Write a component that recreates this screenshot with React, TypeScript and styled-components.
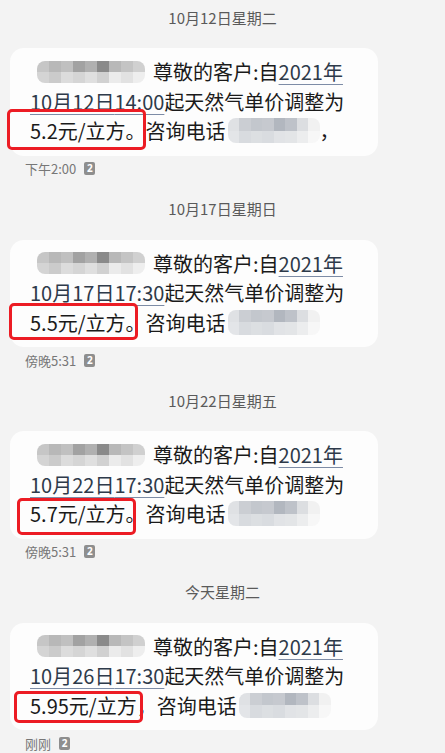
import styled, { createGlobalStyle } from "styled-components";

const GlobalStyle = createGlobalStyle`
  body {
    margin: 0;
    background: #f3f3f3;
    font-family: "Noto Sans CJK SC", "Noto Sans", sans-serif;
  }
`;

const Page = styled.div`
  width: 445px;
  height: 753px;
  overflow: hidden;
  background: #f3f3f3;
`;

const Group = styled.section`
  display: flex;
  flex-direction: column;
  padding-bottom: 14px;
`;

const DayLabel = styled.div`
  height: 34px;
  display: flex;
  align-items: center;
  justify-content: center;
  font-size: 15px;
  color: #5a5a5a;
`;

const Bubble = styled.div`
  margin: 14px 0 0 10px;
  width: 368px;
  box-sizing: border-box;
  padding: 9px 10px 10px 20px;
  background: #fdfdfd;
  border-radius: 14px;
  font-size: 20px;
  color: #1a1a1a;
`;

const Line = styled.div`
  display: flex;
  align-items: center;
  height: 29.5px;
  white-space: nowrap;
`;

const Link = styled.span`
  color: #2e3a4a;
  text-decoration: underline;
  text-decoration-color: #7d8ca6;
  text-decoration-thickness: 1px;
  text-underline-offset: 4px;
`;

const Highlight = styled.span<{ $box: [number, number, number, number] }>`
  position: relative;
  &::after {
    content: "";
    position: absolute;
    top: ${(p) => p.$box[0]}px;
    right: ${(p) => p.$box[1]}px;
    bottom: ${(p) => p.$box[2]}px;
    left: ${(p) => p.$box[3]}px;
    border: 3.5px solid #ec1c24;
    border-radius: 5px;
  }
`;

const Mosaic = styled.span<{ $left: number; $right: number }>`
  display: grid;
  grid-auto-flow: row;
  margin: 0 ${(p) => p.$right}px 0 ${(p) => p.$left}px;
  border-radius: 8px;
  overflow: hidden;
  filter: blur(0.7px);
`;

const MosaicRow = styled.span`
  display: flex;
`;

const Cell = styled.span<{ $shade: string; $w: number; $h: number }>`
  width: ${(p) => p.$w}px;
  height: ${(p) => p.$h}px;
  background: ${(p) => p.$shade};
`;

const Meta = styled.div`
  margin: 4px 0 0 25px;
  height: 18px;
  display: flex;
  align-items: center;
  gap: 8px;
  font-size: 13px;
  color: #777;
`;

const SimBadge = styled.span`
  width: 11px;
  height: 13px;
  border-radius: 2px;
  background: #8e8e8e;
  color: #fff;
  font-size: 10px;
  font-weight: 700;
  line-height: 13px;
  text-align: center;
  font-family: "Noto Sans", sans-serif;
`;

const nameRows = [
  ["#c6c6c6", "#b8b8b8", "#c0c0c0", "#a2a2a2", "#b0b0b0", "#8a8a8a", "#b8b8b8", "#c4c4c4", "#d0d0d0"],
  ["#d4d4d4", "#cbcbcb", "#dcdcdc", "#d5d5d5", "#dfdfdf", "#d1d1d1", "#ebebeb", "#e2e2e2", "#eeeeee"],
];

const phoneRows = [
  ["#dfe1e4", "#cbced3", "#c3c7cd", "#c6c9cf", "#b2b7bf", "#bec2c9", "#dcdee1", "#f1f1f1"],
  ["#e3e5e8", "#d8dbdf", "#dcdfe2", "#d9dce0", "#e1e3e6", "#e3e5e7", "#ecedee", "#f7f7f7"],
];

function Blur({ rows, w, h, left, right }: { rows: string[][]; w: number; h: number; left: number; right: number }) {
  return (
    <Mosaic $left={left} $right={right}>
      {rows.map((row, i) => (
        <MosaicRow key={i}>
          {row.map((c, j) => (
            <Cell key={j} $shade={c} $w={w} $h={h} />
          ))}
        </MosaicRow>
      ))}
    </Mosaic>
  );
}

interface IMessage {
  day: string;
  date: string;
  time: string;
  price: string;
  mark: string;
  box: [number, number, number, number];
  tail: string;
  when: string;
}

const messages: IMessage[] = [
  { day: "10月12日星期二", date: "10月12日", time: "14:00", price: "5.2元/立方", mark: "。", box: [-7, -20, -4.5, -23], tail: "，", when: "下午2:00" },
  { day: "10月17日星期日", date: "10月17日", time: "17:30", price: "5.5元/立方", mark: "。", box: [-4.5, -12, -3, -21], tail: "", when: "傍晚5:31" },
  { day: "10月22日星期五", date: "10月22日", time: "17:30", price: "5.7元/立方", mark: "。", box: [-1, -10, -6.5, -13], tail: "", when: "傍晚5:31" },
  { day: "今天星期二", date: "10月26日", time: "17:30", price: "5.95元/立方", mark: "，", box: [0, -6, -3, -16], tail: "", when: "刚刚" },
];

function App() {
  return (
    <Page>
      <GlobalStyle />
      {messages.map((m) => (
        <Group key={m.day}>
          <DayLabel>{m.day}</DayLabel>
          <Bubble>
            <Line>
              <Blur rows={nameRows} w={12} h={11} left={7} right={8} />
              尊敬的客户:自<Link>2021年</Link>
            </Line>
            <Line>
              <Link>
                {m.date}
                {m.time}
              </Link>
              起天然气单价调整为
            </Line>
            <Line>
              <Highlight $box={m.box}>{m.price}</Highlight>
              {m.mark}咨询电话
              <Blur rows={phoneRows} w={11.5} h={12.5} left={2} right={0} />
              {m.tail}
            </Line>
          </Bubble>
          <Meta>
            {m.when}
            <SimBadge>2</SimBadge>
          </Meta>
        </Group>
      ))}
    </Page>
  );
}

export default App;
